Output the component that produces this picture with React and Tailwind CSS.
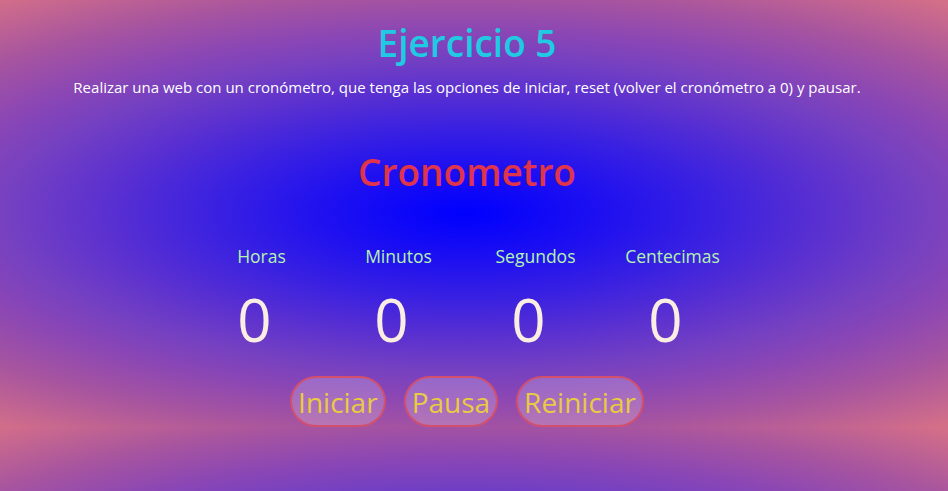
export default function App() {
  const cols = ["Horas", "Minutos", "Segundos", "Centecimas"];
  return (
    <div
      className="w-[948px] h-[491px] overflow-hidden bg-[radial-gradient(ellipse_780px_268px_at_49%_50%,#0000ff_0%,#1e10f0_18%,#3c22e0_33%,#5a30d0_46%,#7440c2_58%,#8a46b5_68%,#a8559f_82%,#d46f88_100%)] bg-[length:100%_427px] bg-repeat"
      style={{ fontFamily: '"Open Sans", "Noto Sans", sans-serif' }}
    >
      <div className="w-[934px] flex flex-col items-center">
        <h1 className="mt-[19px] text-[37px] leading-[48px] font-semibold text-[#1fcae2]">
          Ejercicio 5
        </h1>
        <p className="mt-[10px] text-[15px] leading-[20px] text-white">
          Realizar una web con un cronómetro, que tenga las opciones de iniciar, reset (volver el cronómetro a 0) y pausar.
        </p>
        <h2 className="mt-[51px] text-[37px] leading-[48px] font-semibold text-[#e0344c]">
          Cronometro
        </h2>
        <div className="mt-[48px] flex">
          {cols.map((c) => (
            <div key={c} className="w-[137px] flex flex-col items-center">
              <div className="text-[17.5px] leading-[24px] text-[#b4f2ae]">{c}</div>
              <div className="mt-[13px] mr-[14px] text-[60px] leading-[76px] text-[#faeee2]">0</div>
            </div>
          ))}
        </div>
        <div className="mt-[19px] flex gap-[18px]">
          {["Iniciar", "Pausa", "Reiniciar"].map((b) => (
            <button
              key={b}
              className="h-[51px] px-[6px] rounded-[26px_/_50%] border-2 border-[#d2506e] bg-[rgba(255,255,255,0.2)] text-[28px] leading-[30px] text-[#e8cb42]"
            >
              {b}
            </button>
          ))}
        </div>
      </div>
    </div>
  );
}
